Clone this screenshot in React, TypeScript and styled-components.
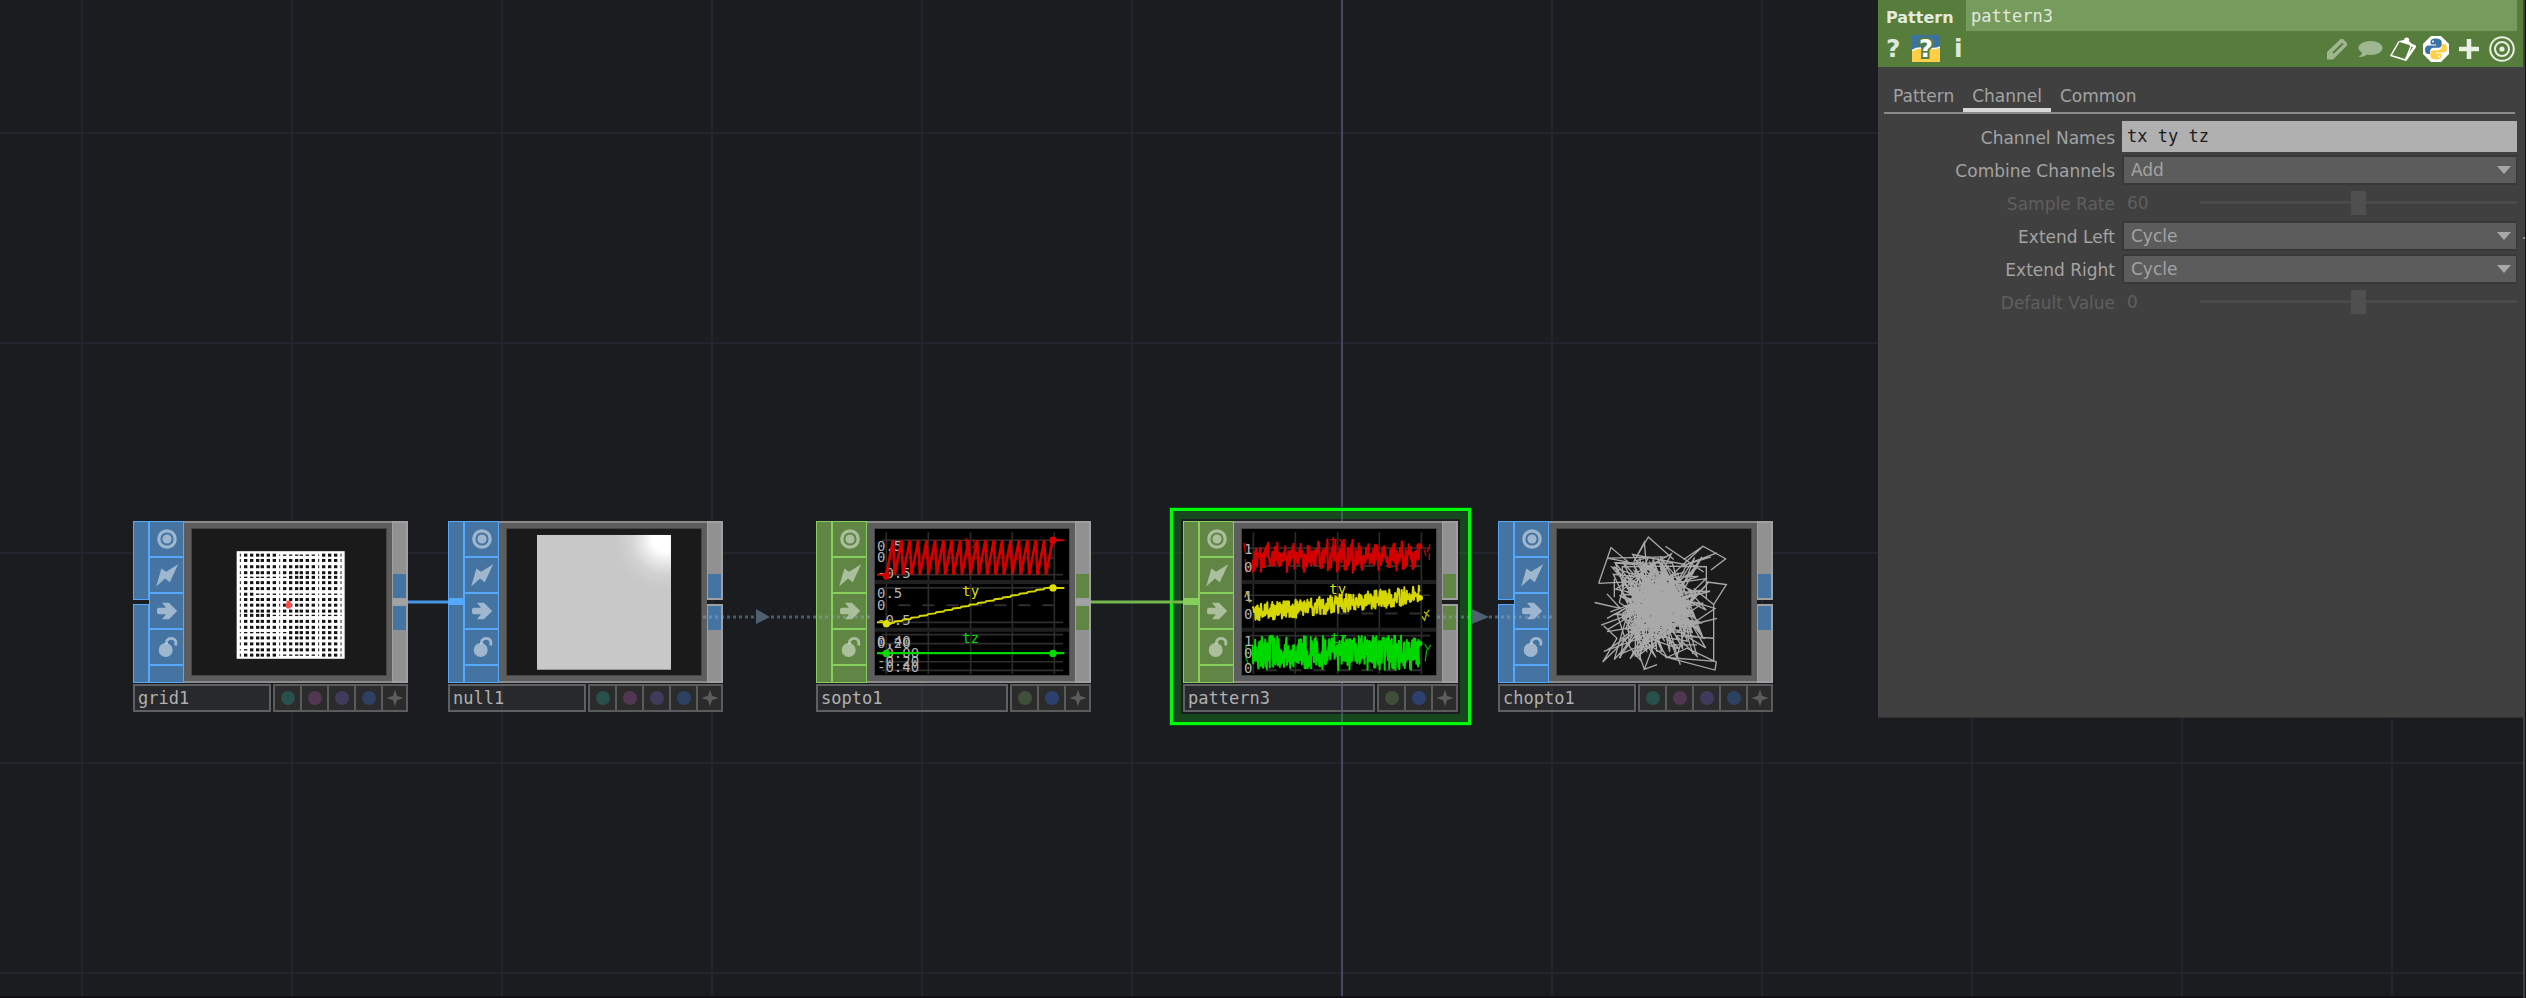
import React from 'react';
import styled, { createGlobalStyle, css } from 'styled-components';

const SANS = '"DejaVu Sans", Verdana, sans-serif';
const MONO = '"DejaVu Sans Mono", monospace';

const GlobalStyle = createGlobalStyle`
  * { box-sizing: border-box; }
  body { margin: 0; background: #1b1c20; font-family: ${SANS}; }
  button, input, select { margin: 0; padding: 0; border: 0; background: none; font: inherit; color: inherit; outline: none; }
`;

type Family = 'sop' | 'chop';

const palette: Record<Family, { fill: string; edge: string }> = {
  sop: { fill: '#4574a2', edge: '#55a8fa' },
  chop: { fill: '#608544', edge: '#86cf5c' },
};

/* ---------- Network canvas ---------- */

const Workspace = styled.div`
  display: flex;
  min-height: 100vh;
  overflow: hidden;
`;

const Network = styled.main`
  position: relative;
  flex: 1;
  display: flex;
  justify-content: flex-end;
  align-items: flex-start;
  border-bottom: 2px solid #151016;
  background:
    linear-gradient(#45456c, #45456c) 1341px 0 / 2px 100% no-repeat,
    repeating-linear-gradient(to right, transparent 0 81px, #24242e 81px 83px, transparent 83px 210px),
    repeating-linear-gradient(to bottom, transparent 0 132px, #24242e 132px 134px, transparent 134px 210px),
    #1b1c20;
`;

const PaneEdge = styled.div`
  width: 3px;
  border-right: 1px solid #121212;
  background:
    linear-gradient(#8a8a8a, #8a8a8a) 0 237px / 100% 2px no-repeat,
    #404040;
`;

const Wires = styled.svg`
  position: absolute;
  left: 0;
  top: 0;
  width: 100%;
  height: 100%;
  pointer-events: none;
`;

/* ---------- Operator node ---------- */

const NodeBox = styled.section<{ $x: number; $y: number; $selected?: boolean }>`
  position: absolute;
  left: ${(p) => p.$x}px;
  top: ${(p) => p.$y}px;
  width: 275px;
  display: flex;
  flex-direction: column;
  gap: 1px;
  ${(p) =>
    p.$selected &&
    css`
      &::before {
        content: '';
        position: absolute;
        inset: -13px;
        border: 3px solid #00fa0a;
        box-shadow: inset 0 0 0 8px rgba(14, 190, 20, 0.27), 0 0 0 1px #0a4d10;
      }
    `}
`;

const NodeBody = styled.div`
  display: flex;
  height: 162px;
  position: relative;
`;

const Port = styled.div`
  width: 16px;
  display: flex;
  flex-direction: column;
  gap: 4px;
`;

const PortPart = styled.div<{ $family: Family }>`
  flex: 1;
  background: ${(p) => palette[p.$family].fill};
  border: 1px solid ${(p) => palette[p.$family].edge};
`;

const PortJoined = styled.div<{ $family: Family }>`
  flex: 1;
  border: 1px solid ${(p) => palette[p.$family].edge};
  background: linear-gradient(
    ${(p) => palette[p.$family].fill} 0 76px,
    ${(p) => palette[p.$family].edge} 76px 83px,
    ${(p) => palette[p.$family].fill} 83px
  );
`;

const FlagColumn = styled.div<{ $family: Family }>`
  width: 35px;
  display: flex;
  flex-direction: column;
  background: ${(p) => palette[p.$family].fill};
  border: 1px solid ${(p) => palette[p.$family].edge};
`;

const FlagButton = styled.button<{ $family: Family }>`
  height: 36px;
  display: grid;
  place-items: center;
  border-bottom: 2px solid ${(p) => palette[p.$family].edge};
  color: rgba(255, 255, 255, 0.48);
`;

const Frame = styled.div`
  flex: 1;
  display: flex;
  background: #5d5d5d;
  border: 2px solid #8b8b8b;
  border-left: 0;
  border-right: 0;
  padding: 6px 6px 6px 8px;
`;

const Viewer = styled.div`
  flex: 1;
  background: #1a1a1a;
  box-shadow: 0 0 0 1px #454545;
  svg { display: block; width: 100%; height: 100%; }
`;

const Output = styled.div<{ $linked?: boolean }>`
  width: 16px;
  display: flex;
  flex-direction: column;
  gap: 4px;
  background: ${(p) => (p.$linked ? '#a3a3a3' : 'transparent')};
`;

const OutHalf = styled.div<{ $end?: boolean }>`
  flex: 1;
  display: flex;
  align-items: ${(p) => (p.$end ? 'flex-end' : 'flex-start')};
  background: #919191;
  border: 2px solid #a0a0a0;
  border-left-width: 1px;
`;

const Plug = styled.span<{ $family: Family }>`
  flex: 1;
  height: 24px;
  background: ${(p) => palette[p.$family].fill};
`;

const NodeFooter = styled.div`
  position: relative;
  display: flex;
  gap: 2px;
  height: 28px;
`;

const NameField = styled.input`
  flex: 1;
  min-width: 0;
  padding: 1px 3px 0;
  border: 2px solid #5f6062;
  background: rgba(255, 255, 255, 0.06);
  color: #b0b0b0;
  font: 17px/23px ${MONO};
`;

const StateBar = styled.div`
  display: flex;
  border: 2px solid #5a5b5c;
  background: #2b2b2b;
`;

const StateButton = styled.button`
  width: 27px;
  display: grid;
  place-items: center;
  & + & { border-left: 2px solid #5a5b5c; }
  &:first-child, &:last-child { width: 25px; }
`;

const Dot = styled.span<{ $color: string }>`
  width: 14px;
  height: 14px;
  border-radius: 50%;
  background: ${(p) => p.$color};
`;

const FlagIcon = ({ kind }: { kind: string }) => (
  <svg width="24" height="24" viewBox="-12 -12 24 24" fill="currentColor" aria-hidden>
    {kind === 'viewer' && (
      <>
        <circle r="8.2" fill="none" stroke="currentColor" strokeWidth="3.2" />
        <circle r="4.6" />
      </>
    )}
    {kind === 'bypass' && <path d="M-10.8 11.5-5.6-6.5-1-3.2 11.2-10.8 2.8 7.2-2 3.6Z" />}
    {kind === 'export' && <path d="M-5-8.3H2L10.2 0 2 8.3H-5L-1 3.3H-8a2 2 0 0 1-2-2v-2.6a2 2 0 0 1 2-2h7Z" />}
    {kind === 'lock' && (
      <>
        <circle cx="-1.3" cy="3" r="7" />
        <path d="M-.5-3V-5.5a5 5 0 0 1 9.3 0V-1.5" fill="none" stroke="currentColor" strokeWidth="2.8" />
      </>
    )}
  </svg>
);

const Star = () => (
  <svg width="18" height="18" viewBox="-9 -9 18 18" aria-hidden>
    <path d="M0-8.5 2-2.2 8.5 0 2 2.2 0 8.5-2 2.2-8.5 0-2-2.2Z" fill="#5c5c5c" />
  </svg>
);

type NodeProps = {
  name: string;
  family: Family;
  x: number;
  input: 'open' | 'solid' | 'linked';
  outputLinked?: boolean;
  selected?: boolean;
  children: React.ReactNode;
};

const states: Record<Family, [string, string][]> = {
  sop: [['Template', '#28504d'], ['Pick', '#523753'], ['Display', '#403a5d'], ['Render', '#2d4163']],
  chop: [['Export', '#3f4f39'], ['Display', '#2c4170']],
};

const OperatorNode = ({ name, family, x, input, outputLinked, selected, children }: NodeProps) => (
  <NodeBox $x={x} $y={521} $selected={selected}>
    <NodeBody>
      <Port>
        {input === 'linked' && <PortJoined $family={family} />}
        {input !== 'linked' && <PortPart $family={family} />}
        {input === 'open' && <PortPart $family={family} />}
      </Port>
      <FlagColumn $family={family}>
        {['viewer', 'bypass', 'export', 'lock'].map((kind) => (
          <FlagButton key={kind} $family={family} aria-label={`${name} ${kind}`}>
            <FlagIcon kind={kind} />
          </FlagButton>
        ))}
      </FlagColumn>
      <Frame>
        <Viewer>{children}</Viewer>
      </Frame>
      <Output $linked={outputLinked}>
        <OutHalf $end><Plug $family={family} /></OutHalf>
        <OutHalf><Plug $family={family} /></OutHalf>
      </Output>
    </NodeBody>
    <NodeFooter>
      <NameField aria-label="Operator name" defaultValue={name} />
      <StateBar>
        {states[family].map(([label, color]) => (
          <StateButton key={label} aria-label={label}><Dot $color={color} /></StateButton>
        ))}
        <StateButton aria-label="Activate"><Star /></StateButton>
      </StateBar>
    </NodeFooter>
  </NodeBox>
);

/* ---------- Viewer contents (drawn at three units per pixel) ---------- */

const random = (seed: number) => () => {
  seed = (seed * 1664525 + 1013904223) % 4294967296;
  return seed / 4294967296;
};

const columns = [145, 161, 179, 197, 211, 229, 247, 263, 278, 296, 314, 328, 346, 364, 380, 395, 413, 431, 447];
const rows = [79, 95, 114, 132, 146, 162, 180, 197, 213, 230, 248, 261, 279, 297, 313, 329, 347, 365, 381];
const thinColumns = [0, 7, 14, 18];

const isThin = (r: number, c: number) =>
  (r === 0 && c > 6 && c < 15) || (r === 4 && c < 9) || (r === 7 && c > 2) ||
  (r === 11 && c > 5) || (r === 14 && c < 9) || (r === 18 && c > 6 && c < 15) || (r === 17 && c < 2);

const GridView = () => (
  <svg viewBox="0 0 582 441" preserveAspectRatio="none">
    <rect x="134" y="67" width="324" height="325" fill="#fff" />
    {rows.map((y, r) =>
      columns.map((x, c) => {
        const w = thinColumns.includes(c) ? 3 : 10;
        const h = isThin(r, c) ? 4 : 9;
        return <rect key={`${r}-${c}`} x={x - w / 2} y={y - h / 2} width={w} height={h} fill="#141414" />;
      }),
    )}
    <path d="M284 217h12v8h4v10h-4v5h-11l-4-6v-9h3Z" fill="#ff4a4a" />
  </svg>
);

const SurfaceView = () => (
  <svg viewBox="0 0 582 441" preserveAspectRatio="none">
    <defs>
      <radialGradient id="shine" gradientUnits="userSpaceOnUse" cx="474" cy="32" r="150">
        <stop offset="0" stopColor="#fff" />
        <stop offset="0.24" stopColor="#fff" />
        <stop offset="0.46" stopColor="#e8e8e8" />
        <stop offset="0.7" stopColor="#d2d2d2" />
        <stop offset="1" stopColor="#c8c8c8" />
      </radialGradient>
    </defs>
    <rect x="90" y="18" width="402" height="407" fill="url(#shine)" />
  </svg>
);

const ChartText = styled.text`
  font: 42px ${MONO};
`;

const verticals = [34, 160, 287, 412, 538];

const ChartBase = ({ lines, dashed }: { lines: number[]; dashed: number[] }) => (
  <>
    <rect width="582" height="441" fill="#000" />
    {verticals.map((x) => <path key={x} d={`M${x} 10V438`} stroke="#2b2b2b" strokeWidth="5" />)}
    {lines.map((y) => <path key={y} d={`M20 ${y}H564`} stroke="#2e2e2e" strokeWidth="5" />)}
    {dashed.map((y) => <path key={y} d={`M34 ${y}H564`} stroke="#2e2e2e" strokeWidth="6" strokeDasharray="36 36" strokeDashoffset="36" />)}
    <path d="M0 160H582M0 304H582" stroke="#202020" strokeWidth="12" />
  </>
);

const AxisLabels = ({ items }: { items: [string, number][] }) => (
  <g fill="#b4b4b4">
    {items.map(([label, y]) => <ChartText key={`${label}${y}`} x="6" y={y}>{label}</ChartText>)}
  </g>
);

const saw = Array.from({ length: 20 }, (_, i) => `${34 + i * 25.2},138 ${54 + i * 25.2},34`).join(' ');
const stairs = Array.from({ length: 20 }, (_, i) => `${34 + i * 25},${285 - i * 5.6} ${56 + i * 25},${283 - i * 5.6}`).join(' ');

const SoptoView = () => (
  <svg viewBox="0 0 582 441" preserveAspectRatio="none">
    <ChartBase lines={[34, 138, 178, 282, 319, 346, 401, 427]} dashed={[87, 230]} />
    <AxisLabels items={[['0.5', 65], ['0', 101], ['-0.5', 148], ['0.5', 209], ['0', 245], ['-0.5', 290], ['0.40', 353], ['0.20', 360], ['-0.00', 389], ['-0.20', 413], ['-0.40', 432]]} />
    <g fill="none" strokeWidth="6">
      <polyline points={saw} stroke="#d40000" strokeWidth="8" />
      <path d="M6 138H34M534 34H568" stroke="#d40000" />
      <polyline points={stairs} stroke="#d8d800" />
      <path d="M6 282H34M534 178H568" stroke="#d8d800" />
      <path d="M6 375H568" stroke="#00d800" strokeWidth="7" />
    </g>
    <g fill="#d40000"><circle cx="34" cy="142" r="11" /><circle cx="534" cy="34" r="11" /><ChartText x="262" y="56">tx</ChartText></g>
    <g fill="#dede00"><circle cx="34" cy="286" r="11" /><circle cx="534" cy="178" r="11" /><ChartText x="262" y="201">ty</ChartText></g>
    <g fill="#00de00"><circle cx="34" cy="376" r="11" /><circle cx="534" cy="376" r="11" /><ChartText x="262" y="345">tz</ChartText></g>
  </svg>
);

const noise = (seed: number, mid: (t: number) => number, amp: number) => {
  const next = random(seed);
  return Array.from({ length: 400 }, (_, i) => {
    const t = i / 399;
    return `${(32 + t * 500).toFixed(1)},${(mid(t) + (next() * 2 - 1) * amp).toFixed(1)}`;
  }).join(' ');
};

const sawNoise = (() => {
  const next = random(7);
  return Array.from({ length: 380 }, (_, i) => {
    const ramp = (i % 19) / 18;
    return `${(32 + (i / 379) * 500).toFixed(1)},${(108 - ramp * 48 + (next() * 2 - 1) * 30).toFixed(1)}`;
  }).join(' ');
})();

const PatternView = () => (
  <svg viewBox="0 0 582 441" preserveAspectRatio="none">
    <ChartBase lines={[58, 200, 322]} dashed={[112, 255, 427]} />
    <g fill="none" strokeWidth="6" strokeLinejoin="round">
      <polyline points={sawNoise} stroke="#d40000" />
      <path d="M6 42l4 30M10 90l2 40 12-20M546 62l6 20M556 70l8-24M562 72v22" stroke="#c00000" strokeWidth="4" />
      <polyline points={noise(21, (t) => (t < 0.5 ? 254 - t * 52 : 226 - (t - 0.5) * 54), 28)} stroke="#d6d600" />
      <path d="M8 206l8-16 6 30 8-4M540 264l8 12 6-22 8-10M546 250l16 14" stroke="#b4b400" strokeWidth="4" />
      <polyline points={noise(83, () => 374, 52)} stroke="#00d800" />
      <path d="M12 350v40l8 20M548 348l10 16 8-14M554 364l-4 36" stroke="#00a800" strokeWidth="4" />
    </g>
    <AxisLabels items={[['1', 76], ['0', 130], ['1', 216], ['0', 273], ['1', 352], ['0', 391], ['0', 434]]} />
    <g fill="#d40000"><circle cx="532" cy="52" r="9" /><ChartText x="262" y="54">tx</ChartText></g>
    <g fill="#dede00"><circle cx="534" cy="208" r="9" /><ChartText x="262" y="197">ty</ChartText></g>
    <g fill="#00de00"><circle cx="532" cy="346" r="9" /><ChartText x="266" y="344">tz</ChartText></g>
  </svg>
);

const tangle = (() => {
  const next = random(41);
  return Array.from({ length: 360 }, () => {
    const spreadX = (next() + next() - 1) * 162;
    const spreadY = (next() + next() - 1) * 176;
    return `${Math.round(306 + spreadX)},${Math.round(226 + spreadY)}`;
  }).join(' ');
})();

const TangleView = () => (
  <svg viewBox="0 0 582 441" preserveAspectRatio="none">
    <g fill="none" stroke="#a9a9a9" strokeWidth="4">
      <polyline points={tangle} />
      <path d="M230 100 262 40 268 110M232 96 274 24 350 92M325 52 440 130M125 164 162 56 214 100 150 88 330 84M125 164 240 158M380 92 438 52 506 90 462 124M438 52 300 180M480 72 380 110 462 84M450 160 508 168 470 228 410 180M113 222 190 240 150 196M196 180 196 114 330 112 448 114 448 210M172 150V206M137 402 180 330 140 292M137 402 220 320M186 390 250 300 150 366M262 424 240 360 290 350 262 424 300 410M330 388 474 426 478 402 390 360 330 388 476 400M470 230V400M470 330 360 322M152 304 240 250 132 290M408 378 390 320 440 330 400 280M140 370 250 330M480 270 400 290 474 240 410 220" />
      <path d="M190 390 200 330 240 386M250 380 262 330M370 410 350 350 420 350M160 250 240 220 150 270M210 300 150 310" />
    </g>
  </svg>
);

/* ---------- Parameter panel ---------- */

const Panel = styled.aside`
  position: relative;
  width: 645px;
  max-width: 100%;
  min-height: 718px;
  background: #404040;
  border-bottom: 1px solid #303032;
  color: #a3a3a3;
  font: 17px/20px ${SANS};
`;

const PanelHeader = styled.header`
  background: #577d3c;
  color: #e4eadf;
`;

const TitleRow = styled.label`
  display: flex;
  align-items: center;
  height: 31px;
  padding: 0 6px 0 8px;
`;

const OpType = styled.span`
  width: 80px;
  padding-top: 4px;
  font-size: 16px;
  font-weight: bold;
`;

const OpName = styled.input`
  flex: 1;
  min-width: 0;
  height: 31px;
  padding: 1px 5px 0;
  background: #759b5d;
  color: #e2e8dc;
  font: 17px/30px ${MONO};
`;

const ToolRow = styled.div`
  display: flex;
  align-items: center;
  gap: 7px;
  height: 36px;
  padding: 0 8px;
`;

const ToolButton = styled.button<{ $faded?: boolean }>`
  display: grid;
  place-items: center;
  width: 26px;
  height: 28px;
  color: #e9efe5;
  opacity: ${(p) => (p.$faded ? 0.5 : 1)};
`;

const HelpButton = styled.button<{ $wide?: boolean }>`
  width: ${(p) => (p.$wide ? 28 : 19)}px;
  height: 28px;
  margin-right: ${(p) => (p.$wide ? 7 : 0)}px;
  text-align: left;
  font: bold 25px/28px ${SANS};
  color: #dfe7da;
`;

const Spacer = styled.span`
  flex: 1;
`;

const Tabs = styled.nav`
  display: flex;
  margin: 17px 8px 6px 6px;
  border-bottom: 2px solid #8a8a8a;
`;

const Tab = styled.button<{ $active?: boolean }>`
  height: 28px;
  padding: 0 9px;
  border-bottom: 4px solid ${(p) => (p.$active ? '#d8d8d8' : 'transparent')};
`;

const Form = styled.form`
  display: flex;
  flex-direction: column;
  padding-right: 6px;
`;

const ParamRow = styled.div<{ $disabled?: boolean }>`
  display: grid;
  grid-template-columns: 237px minmax(0, 1fr);
  column-gap: 7px;
  align-items: center;
  height: 33px;
  color: ${(p) => (p.$disabled ? '#5f5f5f' : '#a3a3a3')};
`;

const ParamLabel = styled.label`
  text-align: right;
  padding-top: 2px;
`;

const TextBox = styled.input`
  width: 100%;
  height: 31px;
  padding: 0 5px;
  background: #b0b0b0;
  color: #1c1c1c;
  font: 17px/31px ${MONO};
`;

const SelectWrap = styled.div`
  display: grid;
  align-items: center;
  justify-items: end;
  & > * { grid-area: 1 / 1; }
  svg { margin-right: 6px; pointer-events: none; }
`;

const Select = styled.select`
  appearance: none;
  width: 100%;
  height: 30px;
  padding: 1px 7px 0;
  border: 2px solid #383838;
  border-right-width: 1px;
  background: #5c5c5c;
  color: #a3a3a3;
`;

const SliderWrap = styled.div`
  display: flex;
  align-items: center;
`;

const SliderValue = styled.output`
  width: 78px;
  padding-left: 5px;
`;

const Range = styled.input`
  appearance: none;
  flex: 1;
  min-width: 0;
  height: 24px;
  background: linear-gradient(#4b4b4b, #4b4b4b) center / 100% 3px no-repeat;
  &::-webkit-slider-thumb {
    appearance: none;
    width: 15px;
    height: 24px;
    background: #4f4f4f;
  }
`;

const PYTHON_SNAKE =
  'M12.8 2.5C9 2.5 7.6 3.8 7.6 6v2.5h5.6v1H5.4C3.2 9.5 2 11.2 2 13.8S3.2 18 5 18h2v-2.6c0-2 1.7-3.6 3.7-3.6h4.9c1.8 0 3-1.3 3-3V6c0-2.3-2-3.5-5.8-3.5Z';

const PythonMark = () => (
  <svg width="26" height="26" viewBox="0 0 26 26" aria-hidden>
    <path d="M8 0H18L26 8V18L18 26H8L0 18V8Z" fill="#fff" />
    <circle cx="13" cy="13" r="12.5" fill="#fff" />
    <path d={PYTHON_SNAKE} fill="#3a72a6" />
    <path d={PYTHON_SNAKE} fill="#ffcf45" transform="rotate(180 13 13)" />
    <circle cx="10" cy="5.5" r="1" fill="#fff" />
    <circle cx="16" cy="20.5" r="1" fill="#fff" />
  </svg>
);

const GlyphText = styled.text`
  font: bold 24px ${SANS};
`;

const Dropdown = ({ id, value }: { id: string; value: string }) => (
  <SelectWrap>
    <Select id={id} defaultValue={value}>
      <option>{value}</option>
    </Select>
    <svg width="14" height="8" viewBox="0 0 14 8" aria-hidden><path d="M0 0H14L7 8Z" fill="#a8a8a8" /></svg>
  </SelectWrap>
);

const Slider = ({ id, value }: { id: string; value: string }) => (
  <SliderWrap>
    <SliderValue htmlFor={id}>{value}</SliderValue>
    <Range id={id} type="range" min="0" max="100" defaultValue="50" disabled />
  </SliderWrap>
);

const ParameterPanel = () => (
  <Panel>
    <PanelHeader>
      <TitleRow>
        <OpType>Pattern</OpType>
        <OpName defaultValue="pattern3" />
      </TitleRow>
      <ToolRow>
        <HelpButton aria-label="Help">?</HelpButton>
        <HelpButton $wide aria-label="Python help">
          <svg width="28" height="27" viewBox="0 0 28 27">
            <rect width="28" height="27" fill="#3b72a4" />
            <path d="M0 16Q6 12 14 13.5T28 12.5V27H0Z" fill="#ffcf47" />
            <path d="M0 15.5Q5 12.5 9 13M19 13.5Q24 14 28 12" stroke="#fff" strokeWidth="1.5" fill="none" />
            <GlyphText x="14" y="22" textAnchor="middle" fill="#fff" stroke="#577d3c" strokeWidth="4" paintOrder="stroke">?</GlyphText>
          </svg>
        </HelpButton>
        <HelpButton aria-label="Info">i</HelpButton>
        <Spacer />
        <ToolButton $faded aria-label="Edit">
          <svg width="26" height="26" viewBox="0 0 26 26">
            <path d="M3 23.5V16L16.5 3H19L23 7V9.5L9 23.5Z" fill="currentColor" />
            <path d="M9 17 19 7.5" stroke="#577d3c" strokeWidth="2" />
          </svg>
        </ToolButton>
        <ToolButton $faded aria-label="Comment">
          <svg width="26" height="26" viewBox="0 0 26 26">
            <path d="M13.5 5C20 5 25.5 8 25.5 12S20 19 13.5 19Q11.5 19 10 18.6 6 22 1 20.5 5 19.5 5 16.5 1.5 14.5 1.5 12C1.5 8 7 5 13.5 5Z" fill="currentColor" />
          </svg>
        </ToolButton>
        <ToolButton aria-label="Clipboard">
          <svg width="26" height="26" viewBox="0 0 26 26" fill="none" stroke="#fff">
            <path d="M9 5.5 1 19.5 15.5 24 21 10" strokeWidth="1.5" />
            <path d="M15.5 24 25 10.5 20 8.5" strokeWidth="2.5" />
            <path d="M9 5 14 4Q14 1 17 1.5T19 5L22 8 21 9.5 9.5 6Z" fill="#fff" stroke="none" />
          </svg>
        </ToolButton>
        <ToolButton aria-label="Python"><PythonMark /></ToolButton>
        <ToolButton aria-label="Add">
          <svg width="26" height="26" viewBox="0 0 26 26"><path d="M13 3V23M3 13H23" stroke="currentColor" strokeWidth="4.5" /></svg>
        </ToolButton>
        <ToolButton aria-label="Target">
          <svg width="26" height="26" viewBox="-13 -13 26 26" fill="none" stroke="currentColor" strokeWidth="2">
            <circle r="11.8" /><circle r="7" /><circle r="2.6" fill="currentColor" stroke="none" />
          </svg>
        </ToolButton>
      </ToolRow>
    </PanelHeader>
    <Tabs>
      <Tab>Pattern</Tab>
      <Tab $active>Channel</Tab>
      <Tab>Common</Tab>
    </Tabs>
    <Form>
      <ParamRow>
        <ParamLabel htmlFor="names">Channel Names</ParamLabel>
        <TextBox id="names" defaultValue="tx ty tz" />
      </ParamRow>
      <ParamRow>
        <ParamLabel htmlFor="combine">Combine Channels</ParamLabel>
        <Dropdown id="combine" value="Add" />
      </ParamRow>
      <ParamRow $disabled>
        <ParamLabel htmlFor="rate">Sample Rate</ParamLabel>
        <Slider id="rate" value="60" />
      </ParamRow>
      <ParamRow>
        <ParamLabel htmlFor="left">Extend Left</ParamLabel>
        <Dropdown id="left" value="Cycle" />
      </ParamRow>
      <ParamRow>
        <ParamLabel htmlFor="right">Extend Right</ParamLabel>
        <Dropdown id="right" value="Cycle" />
      </ParamRow>
      <ParamRow $disabled>
        <ParamLabel htmlFor="default">Default Value</ParamLabel>
        <Slider id="default" value="0" />
      </ParamRow>
    </Form>
  </Panel>
);

export default function App() {
  return (
    <Workspace>
      <GlobalStyle />
      <Network>
        <OperatorNode name="grid1" family="sop" x={133} input="open" outputLinked><GridView /></OperatorNode>
        <OperatorNode name="null1" family="sop" x={448} input="linked"><SurfaceView /></OperatorNode>
        <OperatorNode name="sopto1" family="chop" x={816} input="solid" outputLinked><SoptoView /></OperatorNode>
        <OperatorNode name="pattern3" family="chop" x={1183} input="linked" selected><PatternView /></OperatorNode>
        <OperatorNode name="chopto1" family="sop" x={1498} input="open"><TangleView /></OperatorNode>
        <Wires>
          <path d="M408 602H448" stroke="#4796e6" strokeWidth="3" />
          <path d="M1091 602H1183" stroke="#75b84e" strokeWidth="3" />
          <g stroke="rgba(140, 170, 195, 0.45)" strokeWidth="3" strokeDasharray="3 3">
            <path d="M703 617H754M771 617H872" />
            <path d="M1437 617H1470M1489 617H1552" />
          </g>
          <path d="M756 609 770 617 756 624ZM1472 609 1489 617 1472 624Z" fill="#4f6070" />
        </Wires>
        <ParameterPanel />
      </Network>
      <PaneEdge />
    </Workspace>
  );
}
